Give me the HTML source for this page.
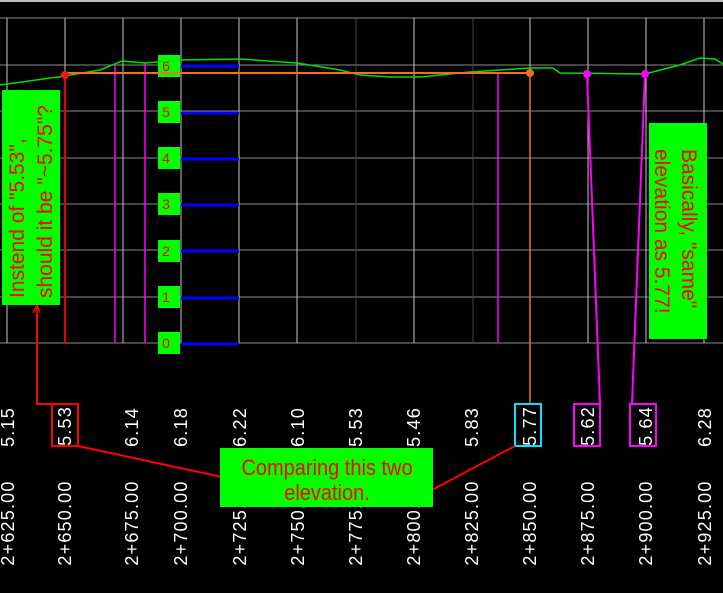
<!DOCTYPE html>
<html><head><style>
body{margin:0;width:723px;height:593px;background:#000;overflow:hidden;font-family:"Liberation Sans",sans-serif}
</style></head><body>
<svg width="723" height="593" xmlns="http://www.w3.org/2000/svg" style="position:absolute;left:0;top:0">
<rect width="723" height="593" fill="#000"/>
<line x1="0" y1="1" x2="723" y2="1" stroke="#bbb" stroke-width="2"/>
<g stroke="#8a8a8a" stroke-width="1">
<line x1="0" y1="18" x2="723" y2="18"/><line x1="0" y1="65" x2="723" y2="65"/><line x1="0" y1="111" x2="723" y2="111"/><line x1="0" y1="158" x2="723" y2="158"/><line x1="0" y1="204" x2="723" y2="204"/><line x1="0" y1="250" x2="723" y2="250"/><line x1="0" y1="297" x2="723" y2="297"/><line x1="0" y1="343" x2="723" y2="343"/>
</g>
<g stroke="#c8c8c8" stroke-width="1">
<line x1="7" y1="18" x2="7" y2="343"/><line x1="65" y1="18" x2="65" y2="343"/><line x1="123" y1="18" x2="123" y2="343"/><line x1="181" y1="18" x2="181" y2="343"/><line x1="239" y1="18" x2="239" y2="343"/><line x1="297" y1="18" x2="297" y2="343"/><line x1="414" y1="18" x2="414" y2="343"/><line x1="530" y1="18" x2="530" y2="343"/><line x1="588" y1="18" x2="588" y2="343"/><line x1="646" y1="18" x2="646" y2="343"/><line x1="704" y1="18" x2="704" y2="343"/>
</g>
<g stroke="#444" stroke-width="1"><line x1="356" y1="18" x2="356" y2="343"/><line x1="473" y1="18" x2="473" y2="343"/></g>
<g stroke="#0000ff" stroke-width="3">
<line x1="181" y1="66" x2="239" y2="66"/><line x1="181" y1="113" x2="239" y2="113"/><line x1="181" y1="159" x2="239" y2="159"/><line x1="181" y1="205" x2="239" y2="205"/><line x1="181" y1="251" x2="239" y2="251"/><line x1="181" y1="298" x2="239" y2="298"/><line x1="181" y1="344" x2="239" y2="344"/>
</g>
<g fill="#00ff00">
<rect x="158" y="55" width="22" height="22"/><rect x="158" y="101" width="22" height="22"/><rect x="158" y="147" width="22" height="22"/><rect x="158" y="193" width="22" height="22"/><rect x="158" y="240" width="22" height="22"/><rect x="158" y="286" width="22" height="22"/><rect x="158" y="332" width="22" height="22"/>
</g>
<g fill="#f00" font-size="14" text-anchor="middle">
<text x="166" y="71">6</text><text x="166" y="117">5</text><text x="166" y="163">4</text><text x="166" y="209">3</text><text x="166" y="256">2</text><text x="166" y="302">1</text><text x="166" y="348">0</text>
</g>
<g stroke="#ff00ff" stroke-width="1.5"><line x1="115" y1="64" x2="115" y2="343"/><line x1="145" y1="63" x2="145" y2="343"/><line x1="498" y1="73" x2="498" y2="343"/></g>
<polyline fill="none" stroke="#00e000" stroke-width="1.5" points="0,85 65,76 100,70 122,61 145,63 181,60 240,59 297,63 340,70 360,75 390,77 420,77 470,72 530,68 553,68 560,73 645,74 680,65 700,58 715,59 723,64"/>
<line x1="65" y1="73" x2="530" y2="73" stroke="#ff6a1a" stroke-width="2"/>
<line x1="65" y1="75" x2="65" y2="343" stroke="#e00000" stroke-width="2"/>
<circle cx="65" cy="75" r="4" fill="#ff1010"/>
<line x1="530" y1="73" x2="530" y2="404" stroke="#f07020" stroke-width="1.5"/>
<circle cx="530" cy="73" r="4" fill="#f07020"/>
<line x1="587" y1="74" x2="600" y2="404" stroke="#ff00ff" stroke-width="2"/>
<line x1="645" y1="74" x2="632" y2="404" stroke="#ff00ff" stroke-width="2"/>
<circle cx="587" cy="74" r="4" fill="#ff00ff"/><circle cx="645" cy="74" r="4" fill="#ff00ff"/>
<polyline fill="none" stroke="#f00" stroke-width="2" points="37,305 37,404 52,404"/>
<polyline fill="none" stroke="#f00" stroke-width="1.5" points="33,313 37,304 40,313"/>
<rect x="2" y="90" width="58" height="215" fill="#00ff00"/>
<text transform="translate(24,298) rotate(-90)" fill="#f00" font-size="21">Instend of "5.53",</text>
<text transform="translate(52,298) rotate(-90)" fill="#f00" font-size="21">should it be "~5.75"?</text>
<rect x="649" y="123" width="58" height="216" fill="#00ff00"/>
<text transform="translate(682,149) rotate(90)" fill="#f00" font-size="21">Basically, "same"</text>
<text transform="translate(655,149) rotate(90)" fill="#f00" font-size="21">elevation as 5.77!</text>
<g fill="#fff" font-size="18" text-anchor="middle" letter-spacing="1.2">
<text transform="translate(14,427) rotate(-90)">5.15</text>
<text transform="translate(71,426) rotate(-90)">5.53</text>
<text transform="translate(138,427) rotate(-90)">6.14</text>
<text transform="translate(187,427) rotate(-90)">6.18</text>
<text transform="translate(246,427) rotate(-90)">6.22</text>
<text transform="translate(304,427) rotate(-90)">6.10</text>
<text transform="translate(362,427) rotate(-90)">5.53</text>
<text transform="translate(420,427) rotate(-90)">5.46</text>
<text transform="translate(478,427) rotate(-90)">5.83</text>
<text transform="translate(536,426) rotate(-90)">5.77</text>
<text transform="translate(594,426) rotate(-90)">5.62</text>
<text transform="translate(652,426) rotate(-90)">5.64</text>
<text transform="translate(711,427) rotate(-90)">6.28</text>
</g>
<g fill="#fff" font-size="18" text-anchor="middle" letter-spacing="1.2">
<text transform="translate(14,523) rotate(-90)">2+625.00</text>
<text transform="translate(71,523) rotate(-90)">2+650.00</text>
<text transform="translate(138,523) rotate(-90)">2+675.00</text>
<text transform="translate(187,523) rotate(-90)">2+700.00</text>
<text transform="translate(246,523) rotate(-90)">2+725.00</text>
<text transform="translate(304,523) rotate(-90)">2+750.00</text>
<text transform="translate(362,523) rotate(-90)">2+775.00</text>
<text transform="translate(420,523) rotate(-90)">2+800.00</text>
<text transform="translate(478,523) rotate(-90)">2+825.00</text>
<text transform="translate(536,523) rotate(-90)">2+850.00</text>
<text transform="translate(594,523) rotate(-90)">2+875.00</text>
<text transform="translate(652,523) rotate(-90)">2+900.00</text>
<text transform="translate(711,523) rotate(-90)">2+925.00</text>
</g>
<rect x="52" y="404" width="26" height="42" fill="none" stroke="#f00" stroke-width="2"/>
<rect x="515" y="404" width="26" height="42" fill="none" stroke="#00e5ff" stroke-width="2"/>
<rect x="574" y="404" width="26" height="42" fill="none" stroke="#ff00ff" stroke-width="2"/>
<rect x="630" y="404" width="26" height="42" fill="none" stroke="#ff00ff" stroke-width="2"/>
<line x1="78" y1="446" x2="222" y2="477" stroke="#f00" stroke-width="2"/>
<line x1="515" y1="446" x2="430" y2="491" stroke="#f00" stroke-width="2"/>
<rect x="220" y="448" width="213" height="59" fill="#00ff00"/>
<text transform="translate(327,475) scale(1,1.1)" fill="#f00" font-size="20" text-anchor="middle">Comparing this two</text>
<text transform="translate(327,500) scale(1,1.1)" fill="#f00" font-size="20" text-anchor="middle">elevation.</text>
</svg>
</body></html>
